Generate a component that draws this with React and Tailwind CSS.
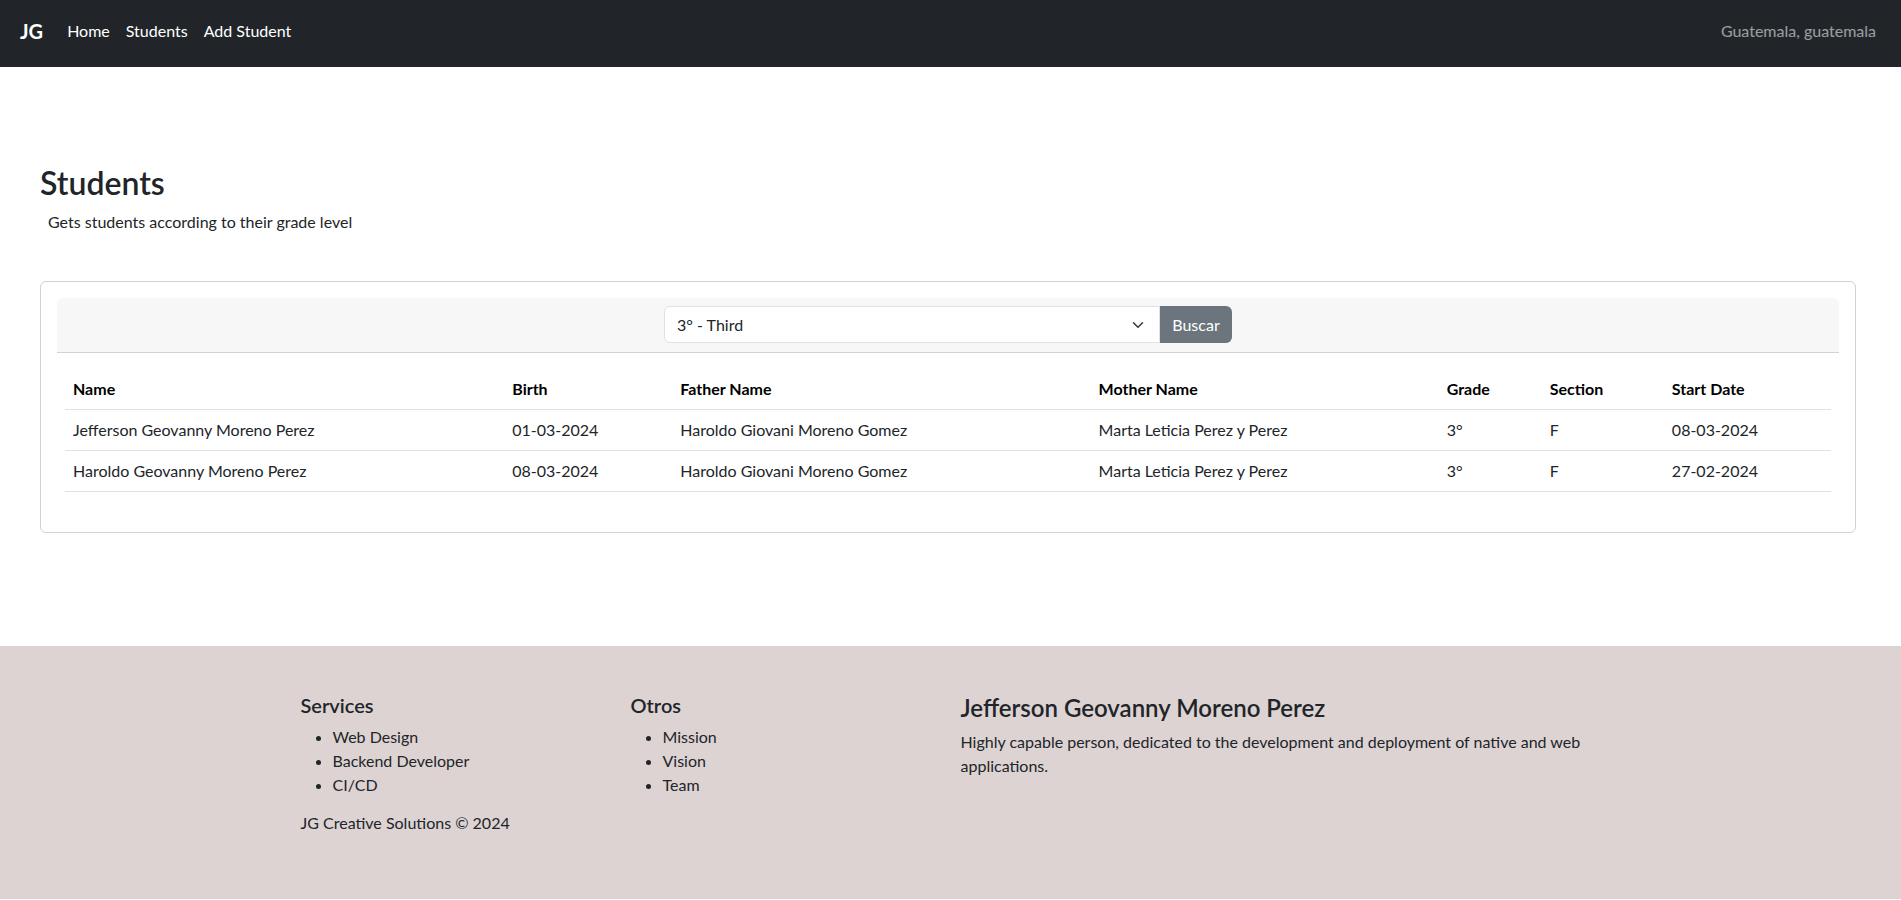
import React from "react";

const rows = [
  {
    name: "Jefferson Geovanny Moreno Perez",
    birth: "01-03-2024",
    father: "Haroldo Giovani Moreno Gomez",
    mother: "Marta Leticia Perez y Perez",
    grade: "3°",
    section: "F",
    start: "08-03-2024",
  },
  {
    name: "Haroldo Geovanny Moreno Perez",
    birth: "08-03-2024",
    father: "Haroldo Giovani Moreno Gomez",
    mother: "Marta Leticia Perez y Perez",
    grade: "3°",
    section: "F",
    start: "27-02-2024",
  },
];

export default function App() {
  return (
    <div
      className="min-h-screen bg-white text-[#212529] text-[16px] leading-6"
      style={{ fontFamily: "Lato, 'Open Sans', sans-serif" }}
    >
      {/* Navbar */}
      <nav className="h-[67px] bg-[#212529] flex items-center justify-between pl-[20px] pr-[25px] pb-[5px]">
        <div className="flex items-center">
          <span className="text-white text-[20px] font-bold mr-[16px] leading-none">JG</span>
          <a className="text-white px-2">Home</a>
          <a className="text-white px-2">Students</a>
          <a className="text-white px-2">Add Student</a>
        </div>
        <span className="text-white/55">Guatemala, guatemala</span>
      </nav>

      {/* Main */}
      <main className="pl-10 pr-[45px] pt-[97px] pb-[113px]">
        <h2 className="text-[32px] leading-[38px] font-semibold mb-2 text-[#212529]">Students</h2>
        <p className="pl-2 mb-[47px]">Gets students according to their grade level</p>

        <div className="border border-[#d2d2d2] rounded-md pt-4 px-4 pb-10">
          <div className="bg-[#f7f7f7] rounded-t-md border-b border-[#d2d2d2] pt-2 pb-[9px] flex justify-center">
            <div className="flex h-[37px]">
              <div className="w-[496px] h-full border border-[#dee2e6] rounded-l-md bg-white flex items-center justify-between pl-3 pr-[13px]">
                <span>3° - Third</span>
                <svg width="16" height="12" viewBox="0 0 16 16" className="mt-[1px]">
                  <path d="m2 5 6 6 6-6" fill="none" stroke="#343a40" strokeWidth="2" strokeLinecap="round" strokeLinejoin="round" />
                </svg>
              </div>
              <button className="w-[72px] h-full bg-[#6c757d] text-white rounded-r-md">Buscar</button>
            </div>
          </div>

          <div className="px-2 mt-4">
            <table className="w-full table-fixed border-collapse text-left">
              <thead>
                <tr className="border-b border-[#dee2e6]">
                  <th className="w-[439px] px-2 py-2 font-bold text-black">Name</th>
                  <th className="w-[168px] px-2 py-2 font-bold text-black">Birth</th>
                  <th className="w-[418px] px-2 py-2 font-bold text-black">Father Name</th>
                  <th className="w-[348px] px-2 py-2 font-bold text-black">Mother Name</th>
                  <th className="w-[103px] px-2 py-2 font-bold text-black">Grade</th>
                  <th className="w-[122px] px-2 py-2 font-bold text-black">Section</th>
                  <th className="w-[167px] px-2 py-2 font-bold text-black">Start Date</th>
                </tr>
              </thead>
              <tbody>
                {rows.map((r, i) => (
                  <tr key={i} className="border-b border-[#dee2e6]">
                    <td className="px-2 py-2">{r.name}</td>
                    <td className="px-2 py-2">{r.birth}</td>
                    <td className="px-2 py-2">{r.father}</td>
                    <td className="px-2 py-2">{r.mother}</td>
                    <td className="px-2 py-2">{r.grade}</td>
                    <td className="px-2 py-2">{r.section}</td>
                    <td className="px-2 py-2">{r.start}</td>
                  </tr>
                ))}
              </tbody>
            </table>
          </div>
        </div>
      </main>

      {/* Footer */}
      <footer className="bg-[#ddd3d3] pt-[47px] pb-12">
        <div className="w-[1320px] mx-auto grid grid-cols-[330px_330px_660px]">
          <div className="pl-[10px] pr-[14px]">
            <h5 className="text-[20px] leading-6 font-semibold mb-2">Services</h5>
            <ul className="list-disc pl-8 mb-[14px]">
              <li>Web Design</li>
              <li>Backend Developer</li>
              <li>CI/CD</li>
            </ul>
            <p className="mb-4">JG Creative Solutions © 2024</p>
          </div>
          <div className="pl-[10px] pr-[14px]">
            <h5 className="text-[20px] leading-6 font-semibold mb-2">Otros</h5>
            <ul className="list-disc pl-8 mb-4">
              <li>Mission</li>
              <li>Vision</li>
              <li>Team</li>
            </ul>
          </div>
          <div className="pl-[10px] pr-[14px]">
            <h4 className="text-[24px] leading-[29px] font-semibold mb-2">Jefferson Geovanny Moreno Perez</h4>
            <p className="pr-2">
              Highly capable person, dedicated to the development and deployment of native and web applications.
            </p>
          </div>
        </div>
      </footer>
    </div>
  );
}
